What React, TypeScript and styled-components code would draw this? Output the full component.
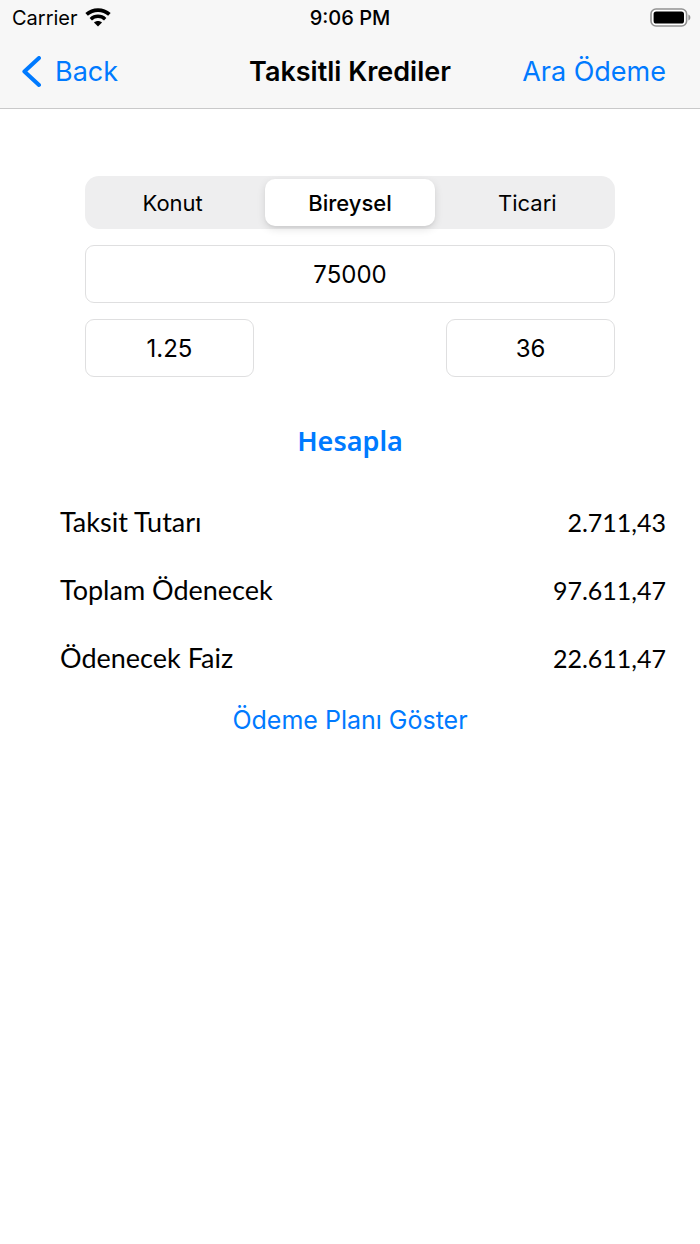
import React, { useState } from "react";
import styled, { createGlobalStyle } from "styled-components";

const BLUE = "#007aff";

const GlobalStyle = createGlobalStyle`
  * { box-sizing: border-box; }
  body {
    margin: 0;
    background: #fff;
    color: #000;
    font-family: Inter, "Liberation Sans", sans-serif;
  }
  button, input { font: inherit; color: inherit; }
`;

const Header = styled.header`
  background: #f7f7f7;
  border-bottom: 1px solid #c9c9ca;
`;

const StatusBar = styled.div`
  display: grid;
  grid-template-columns: 1fr auto 1fr;
  align-items: center;
  height: 36px;
  padding: 0 9px;
  font-size: 20px;
  line-height: 24px;
`;

const Carrier = styled.div`
  display: flex;
  align-items: center;
  gap: 7px;
  padding-left: 3px;
`;

const Clock = styled.time`
  font-weight: 500;
`;

const Battery = styled.svg`
  justify-self: end;
`;

const NavBar = styled.nav`
  display: grid;
  grid-template-columns: 1fr auto 1fr;
  align-items: center;
  height: 72px;
  padding: 0 22px;
`;

const NavButton = styled.button<{ $end?: boolean }>`
  display: flex;
  align-items: center;
  gap: 14px;
  justify-self: ${(p) => (p.$end ? "end" : "start")};
  padding: ${(p) => (p.$end ? "0 12px 0 0" : "0")};
  border: 0;
  background: none;
  color: ${BLUE};
  font-size: 27px;
  line-height: 36px;
  white-space: nowrap;
  cursor: pointer;
`;

const Title = styled.h1`
  margin: 0;
  font-size: 27px;
  font-weight: 600;
  line-height: 36px;
  white-space: nowrap;
`;

const Form = styled.form`
  display: flex;
  flex-direction: column;
  gap: 16px;
  padding: 67px 85px 0;
`;

const Segments = styled.fieldset`
  display: grid;
  grid-template-columns: repeat(3, minmax(0, 1fr));
  gap: 8px;
  min-width: 0;
  margin: 0;
  padding: 3px;
  border: 0;
  border-radius: 14px;
  background: #eeeeef;
`;

const Segment = styled.label<{ $selected: boolean }>`
  display: flex;
  align-items: center;
  justify-content: center;
  height: 47px;
  border-radius: 10px;
  background: ${(p) => (p.$selected ? "#fff" : "transparent")};
  box-shadow: ${(p) =>
    p.$selected ? "0 3px 8px rgba(0,0,0,0.12), 0 2px 2px rgba(0,0,0,0.04)" : "none"};
  font-size: 22px;
  font-weight: ${(p) => (p.$selected ? 500 : 400)};
  line-height: 28px;
  cursor: pointer;
`;

const SegmentRadio = styled.input`
  appearance: none;
  width: 0;
  height: 0;
  margin: 0;
`;

const FieldRow = styled.div`
  display: grid;
  grid-template-columns: 169px 169px;
  justify-content: space-between;
`;

const Field = styled.input`
  width: 100%;
  height: 58px;
  padding: 0 12px;
  border: 1px solid #dfdfe0;
  border-radius: 9px;
  background: #fff;
  font-size: 24px;
  line-height: 32px;
  text-align: center;
`;

const Calculate = styled.button`
  align-self: center;
  margin-top: 28px;
  padding: 0;
  border: 0;
  background: none;
  color: ${BLUE};
  font-family: "Noto Sans", "Open Sans", sans-serif;
  font-size: 27px;
  font-weight: 600;
  line-height: 40px;
  cursor: pointer;
`;

const Results = styled.dl`
  margin: 27px 0 0;
  padding: 0 34px 0 60px;
  font-family: Lato, "Open Sans", sans-serif;
`;

const ResultRow = styled.div`
  display: flex;
  justify-content: space-between;
  align-items: baseline;
  height: 68px;
  line-height: 68px;
`;

const ResultLabel = styled.dt`
  font-size: 27px;
`;

const ResultValue = styled.dd`
  margin: 0;
  font-size: 25px;
`;

const PlanButton = styled.button`
  display: block;
  margin: 10px auto 0;
  padding: 0;
  border: 0;
  background: none;
  color: ${BLUE};
  font-size: 25px;
  line-height: 36px;
  cursor: pointer;
`;

const loanTypes = ["Konut", "Bireysel", "Ticari"];

const results = [
  { label: "Taksit Tutarı", value: "2.711,43" },
  { label: "Toplam Ödenecek", value: "97.611,47" },
  { label: "Ödenecek Faiz", value: "22.611,47" },
];

export default function App() {
  const [loanType, setLoanType] = useState("Bireysel");

  return (
    <>
      <GlobalStyle />
      <Header>
        <StatusBar>
          <Carrier>
            <span>Carrier</span>
            <svg width="26" height="20" viewBox="0 0 26 20" fill="none" aria-hidden="true">
              <path d="M1.6 6.4C8 .6 18 .6 24.4 6.4" stroke="#000" strokeWidth="3.8" />
              <path d="M5.8 11.2C10 7.4 16 7.4 20.2 11.2" stroke="#000" strokeWidth="3.5" />
              <path d="M13 18.4l-4-3.9c2.2-2 5.8-2 8 0z" fill="#000" />
            </svg>
          </Carrier>
          <Clock>9:06 PM</Clock>
          <Battery width="42" height="20" viewBox="0 0 42 20" aria-hidden="true">
            <rect x="2" y="1" width="35.6" height="17" rx="5" fill="#fff" stroke="#929292" strokeWidth="1.6" />
            <rect x="4.6" y="3.4" width="30.4" height="12.2" rx="2.6" fill="#000" />
            <path d="M39.4 6.6c2.6 1 2.6 5 0 6z" fill="#929292" />
          </Battery>
        </StatusBar>
        <NavBar>
          <NavButton type="button">
            <svg width="19" height="32" viewBox="0 0 19 32" fill="none" aria-hidden="true">
              <path d="M17 2L2.4 15.5L17 29" stroke={BLUE} strokeWidth="4" strokeLinecap="round" strokeLinejoin="round" />
            </svg>
            Back
          </NavButton>
          <Title>Taksitli Krediler</Title>
          <NavButton type="button" $end>
            Ara Ödeme
          </NavButton>
        </NavBar>
      </Header>
      <main>
        <Form onSubmit={(e) => e.preventDefault()}>
          <Segments aria-label="Kredi türü">
            {loanTypes.map((type) => (
              <Segment key={type} $selected={type === loanType}>
                <SegmentRadio
                  type="radio"
                  name="loanType"
                  value={type}
                  checked={type === loanType}
                  onChange={() => setLoanType(type)}
                />
                {type}
              </Segment>
            ))}
          </Segments>
          <Field aria-label="Kredi tutarı" inputMode="numeric" defaultValue="75000" />
          <FieldRow>
            <Field aria-label="Faiz oranı" inputMode="decimal" defaultValue="1.25" />
            <Field aria-label="Vade" inputMode="numeric" defaultValue="36" />
          </FieldRow>
          <Calculate type="submit">Hesapla</Calculate>
        </Form>
        <Results>
          {results.map((r) => (
            <ResultRow key={r.label}>
              <ResultLabel>{r.label}</ResultLabel>
              <ResultValue>{r.value}</ResultValue>
            </ResultRow>
          ))}
        </Results>
        <PlanButton type="button">Ödeme Planı Göster</PlanButton>
      </main>
    </>
  );
}
